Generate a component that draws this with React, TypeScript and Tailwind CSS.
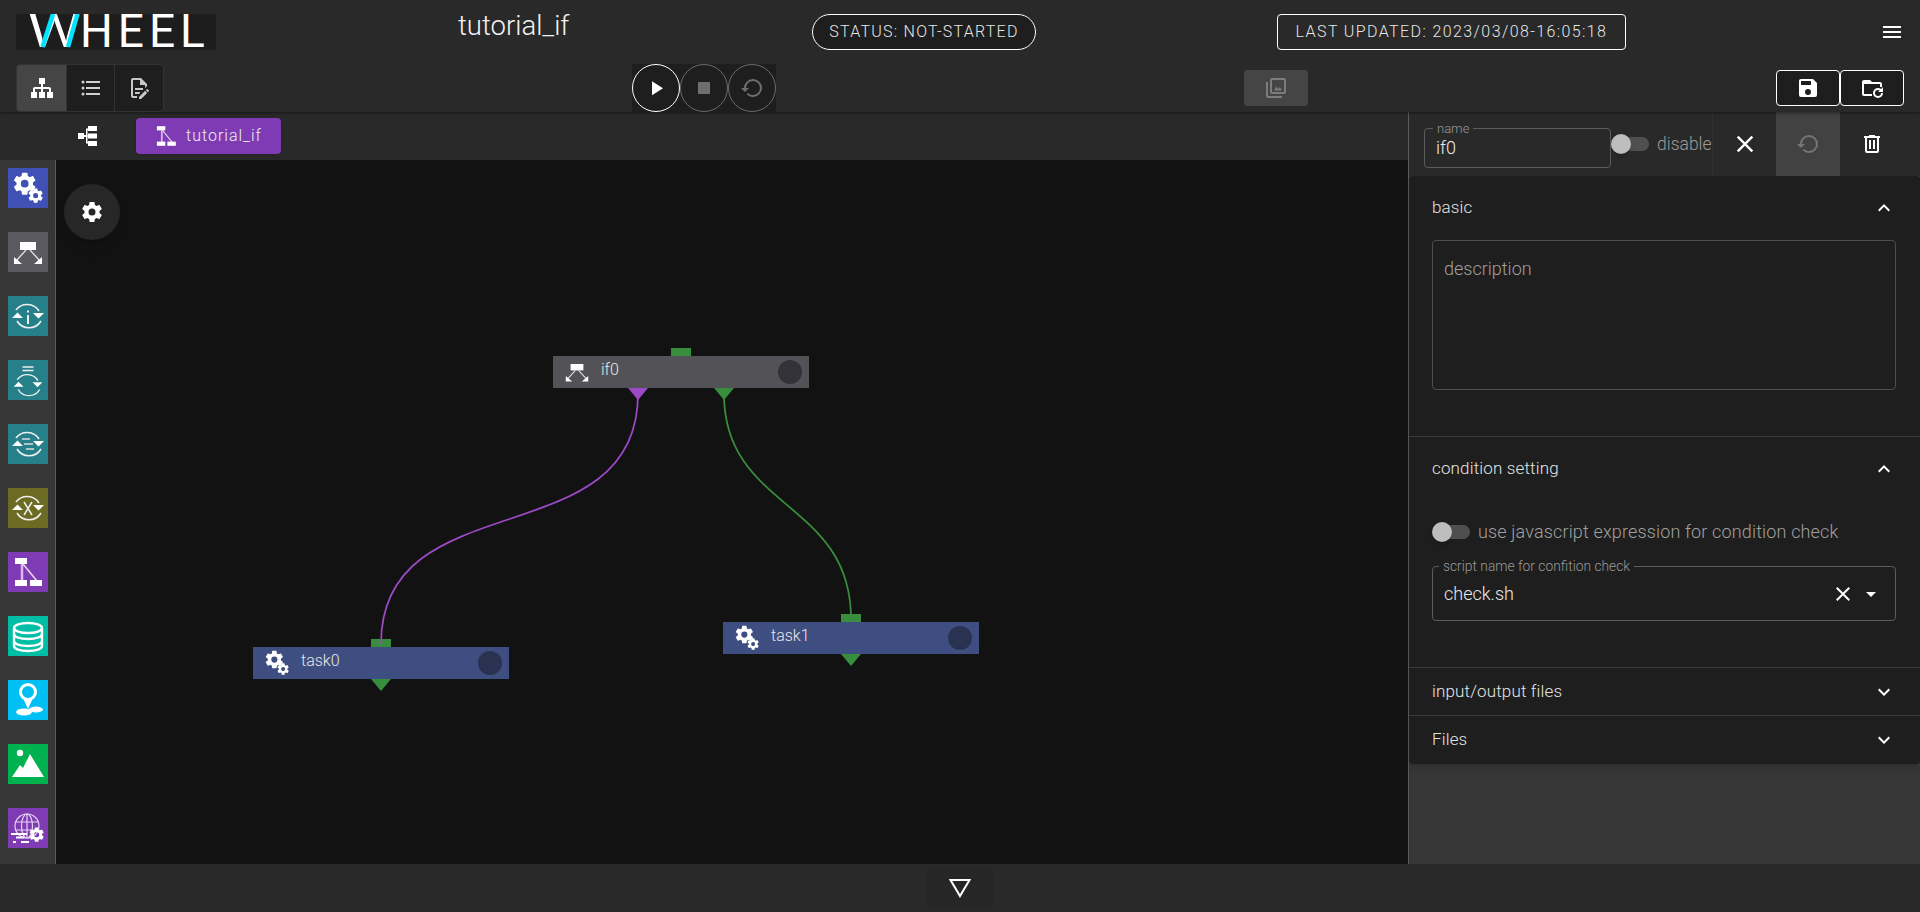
import type { ReactNode } from "react";

const MDI = {
  sitemap: "M9,2V8H11V11H5C3.89,11 3,11.89 3,13V16H1V22H7V16H5V13H11V16H9V22H15V16H13V13H19V16H17V22H23V16H21V13C21,11.89 20.11,11 19,11H13V8H15V2H9Z",
  list: "M7,5H21V7H7V5M7,13V11H21V13H7M4,4.5A1.5,1.5 0 0,1 5.5,6A1.5,1.5 0 0,1 4,7.5A1.5,1.5 0 0,1 2.5,6A1.5,1.5 0 0,1 4,4.5M4,10.5A1.5,1.5 0 0,1 5.5,12A1.5,1.5 0 0,1 4,13.5A1.5,1.5 0 0,1 2.5,12A1.5,1.5 0 0,1 4,10.5M7,19V17H21V19H7M4,16.5A1.5,1.5 0 0,1 5.5,18A1.5,1.5 0 0,1 4,19.5A1.5,1.5 0 0,1 2.5,18A1.5,1.5 0 0,1 4,16.5Z",
  fileEdit: "M8,12H16V14H8V12M10,20H6V4H13V9H18V12.1L20,10.1V8L14,2H6A2,2 0 0,0 4,4V20A2,2 0 0,0 6,22H10V20M8,18H12.1L13,17.1V16H8V18M20.2,13C20.3,13 20.5,13.1 20.6,13.2L21.9,14.5C22.1,14.7 22.1,15.1 21.9,15.3L20.9,16.3L18.8,14.2L19.8,13.2C19.9,13.1 20,13 20.2,13M20.2,16.9L14.1,23H12V20.9L18.1,14.8L20.2,16.9Z",
  play: "M8,5.14V19.14L19,12.14L8,5.14Z",
  stop: "M18,18H6V6H18V18Z",
  restore: "M13,3A9,9 0 0,0 4,12H1L4.89,15.89L4.96,16.03L9,12H6A7,7 0 0,1 13,5A7,7 0 0,1 20,12A7,7 0 0,1 13,19C11.07,19 9.32,18.21 8.06,16.94L6.64,18.36C8.27,20 10.5,21 13,21A9,9 0 0,0 22,12A9,9 0 0,0 13,3Z",
  images: "M22,16V4A2,2 0 0,0 20,2H8A2,2 0 0,0 6,4V16A2,2 0 0,0 8,18H20A2,2 0 0,0 22,16M8,16V4H20V16H8M2,6V20A2,2 0 0,0 4,22H18V20H4V6H2M12.5,10.5L10,14.5H18L15.8,11L14.3,13L12.5,10.5Z",
  save: "M15,9H5V5H15M12,19A3,3 0 0,1 9,16A3,3 0 0,1 12,13A3,3 0 0,1 15,16A3,3 0 0,1 12,19M17,3H5C3.89,3 3,3.9 3,5V19A2,2 0 0,0 5,21H19A2,2 0 0,0 21,19V7L17,3Z",
  folderRefresh: "M4,4C2.89,4 2,4.89 2,6V18A2,2 0 0,0 4,20H12V18H4V8H20V11H22V8C22,6.89 21.1,6 20,6H12L10,4H4M18,12A5,5 0 0,0 13,17A5,5 0 0,0 18,22A5,5 0 0,0 23,17H21A3,3 0 0,1 18,20A3,3 0 0,1 15,17A3,3 0 0,1 18,14C18.6,14 19.2,14.2 19.7,14.5L18,16H23V11L21.2,13.1C20.3,12.4 19.2,12 18,12Z",
  menu: "M3,6H21V8H3V6M3,11H21V13H3V11M3,16H21V18H3V16Z",
  close: "M19,6.41L17.59,5L12,10.59L6.41,5L5,6.41L10.59,12L5,17.59L6.41,19L12,13.41L17.59,19L19,17.59L13.41,12L19,6.41Z",
  trash: "M9,3V4H4V6H5V19A2,2 0 0,0 7,21H17A2,2 0 0,0 19,19V6H20V4H15V3H9M7,6H17V19H7V6M9,8V17H11V8H9M13,8V17H15V8H13Z",
  up: "M7.41,15.41L12,10.83L16.59,15.41L18,14L12,8L6,14L7.41,15.41Z",
  down: "M7.41,8.58L12,13.17L16.59,8.58L18,10L12,16L6,10L7.41,8.58Z",
  caret: "M7,10L12,15L17,10H7Z",
  cog: "M12,15.5A3.5,3.5 0 0,1 8.5,12A3.5,3.5 0 0,1 12,8.5A3.5,3.5 0 0,1 15.5,12A3.5,3.5 0 0,1 12,15.5M19.43,12.97C19.47,12.65 19.5,12.33 19.5,12C19.5,11.67 19.47,11.34 19.43,11L21.54,9.37C21.73,9.22 21.78,8.95 21.66,8.73L19.66,5.27C19.54,5.05 19.27,4.96 19.05,5.05L16.56,6.05C16.04,5.66 15.5,5.32 14.87,5.07L14.5,2.42C14.46,2.18 14.25,2 14,2H10C9.75,2 9.54,2.18 9.5,2.42L9.13,5.07C8.5,5.32 7.96,5.66 7.44,6.05L4.95,5.05C4.73,4.96 4.46,5.05 4.34,5.27L2.34,8.73C2.21,8.95 2.27,9.22 2.46,9.37L4.57,11C4.53,11.34 4.5,11.67 4.5,12C4.5,12.33 4.53,12.65 4.57,12.97L2.46,14.63C2.27,14.78 2.21,15.05 2.34,15.27L4.34,18.73C4.46,18.95 4.73,19.03 4.95,18.95L7.44,17.94C7.96,18.34 8.5,18.68 9.13,18.93L9.5,21.58C9.54,21.82 9.75,22 10,22H14C14.25,22 14.46,21.82 14.5,21.58L14.87,18.93C15.5,18.67 16.04,18.34 16.56,17.94L19.05,18.95C19.27,19.03 19.54,18.95 19.66,18.73L21.66,15.27C21.78,15.05 21.73,14.78 21.54,14.63L19.43,12.97Z",
};

function Mdi({ d, className }: { d: string; className?: string }) {
  return (
    <svg viewBox="0 0 24 24" fill="currentColor" className={className}>
      <path d={d} />
    </svg>
  );
}

/* component glyphs, all in a 40 unit box */
function Gears({ className }: { className?: string }) {
  return (
    <svg viewBox="0 0 40 40" fill="#fff" className={className}>
      <path d={MDI.cog} transform="translate(3.500 2.500) scale(1.1)" />
      <path d={MDI.cog} transform="translate(19 19) scale(.72)" />
    </svg>
  );
}

function Branch({ className }: { className?: string }) {
  return (
    <svg viewBox="0 0 40 40" className={className}>
      <rect x="12" y="10" width="16" height="8" fill="#fff" />
      <path d="M18 18 8 29M22 18l10 11" stroke="#ddd" strokeWidth="1.4" />
      <path d="M6 25v7h8zM34 25v7h-8z" fill="#fff" />
    </svg>
  );
}

function LoopArrows({ small, children }: { small?: boolean; children?: ReactNode }) {
  const y = small ? 6 : 0;
  return (
    <svg viewBox="0 0 40 40" className="h-10 w-10">
      <g transform={`translate(0 ${y}) ${small ? "translate(2 1) scale(.9)" : ""}`}>
        <path d="M8 14A14 14 0 0 1 31 15" fill="none" stroke="#eee" strokeWidth="1.6" />
        <path d="M33 25A14 14 0 0 1 9 25" fill="none" stroke="#eee" strokeWidth="1.6" />
        <path d="M25 17h11l-5.500 5.500zM4 22h11l-5.500-5.500z" fill="#fff" />
      </g>
      {children}
    </svg>
  );
}

function Workflow({ className }: { className?: string }) {
  return (
    <svg viewBox="0 0 40 40" className={className}>
      <path d="M14 12v20" stroke="#d9b8ee" strokeWidth="2.500" />
      <path d="M15 12 29 29" stroke="#e6d3f3" strokeWidth="1.600" />
      <rect x="7" y="6" width="12" height="6" fill="#fff" />
      <rect x="7" y="28" width="12" height="6" fill="#fff" />
      <rect x="22" y="28" width="12" height="6" fill="#fff" />
    </svg>
  );
}

const PALETTE: { bg: string; icon: ReactNode }[] = [
  { bg: "bg-[#3f51b5]", icon: <Gears className="h-10 w-10" /> },
  { bg: "bg-[#5a5a60]", icon: <Branch className="h-10 w-10" /> },
  {
    bg: "bg-[#26808a]",
    icon: (
      <LoopArrows>
        <rect x="19" y="19" width="2" height="9" fill="#eee" />
        <rect x="19" y="14.500" width="2" height="2" fill="#eee" />
      </LoopArrows>
    ),
  },
  {
    bg: "bg-[#26808a]",
    icon: (
      <LoopArrows small>
        <path d="M14.500 7h11M14.500 10.500h11" stroke="#eee" strokeWidth="1.300" />
      </LoopArrows>
    ),
  },
  {
    bg: "bg-[#26808a]",
    icon: (
      <LoopArrows>
        <path d="M14 15h8M16 20h9M18 25h8" stroke="#ddd" strokeWidth="1.500" />
      </LoopArrows>
    ),
  },
  {
    bg: "bg-[#6b6b24]",
    icon: (
      <LoopArrows>
        <path d="M16 14l8 13M24 14l-8 13" stroke="#eee" strokeWidth="1.500" />
      </LoopArrows>
    ),
  },
  { bg: "bg-[#7e3bb3]", icon: <Workflow className="h-10 w-10" /> },
  {
    bg: "bg-[#00bda5]",
    icon: (
      <svg viewBox="0 0 40 40" className="h-10 w-10" fill="none" stroke="#fff" strokeWidth="2.400">
        <ellipse cx="20" cy="12" rx="14" ry="5" />
        <path d="M6 12v18c0 3 6 5 14 5s14-2 14-5V12M6 18c0 3 6 5 14 5s14-2 14-5M6 25c0 3 6 5 14 5s14-2 14-5" />
      </svg>
    ),
  },
  {
    bg: "bg-[#00bff3]",
    icon: (
      <svg viewBox="0 0 40 40" className="h-10 w-10">
        <circle cx="20" cy="12" r="7.500" fill="none" stroke="#fff" strokeWidth="3" />
        <path d="M15 18 20 29 25 18z" fill="#fff" />
        <ellipse cx="16" cy="32" rx="8" ry="3.500" fill="#fff" />
        <ellipse cx="28" cy="29.500" rx="7" ry="3" fill="#fff" />
      </svg>
    ),
  },
  {
    bg: "bg-[#00b14f]",
    icon: (
      <svg viewBox="0 0 40 40" className="h-10 w-10" fill="#fff">
        <circle cx="12" cy="9" r="3.200" />
        <path d="M4 33l8-12 3 3 7-14 14 23z" />
      </svg>
    ),
  },
  {
    bg: "bg-[#7e3bb3]",
    icon: (
      <svg viewBox="0 0 40 40" className="h-10 w-10">
        <g fill="none" stroke="#e6d3f3" strokeWidth="1.200">
          <circle cx="19" cy="18" r="12" />
          <ellipse cx="19" cy="18" rx="5.500" ry="12" />
          <path d="M7 14h24M7 22h24M19 6v24" />
        </g>
        <path d="M3 26h16M8 29.500h8M5 34h3M13 34h8" stroke="#fff" strokeWidth="2" />
        <path d={MDI.cog} transform="translate(20 18) scale(.72)" fill="#fff" />
      </svg>
    ),
  },
];

function Node({
  name,
  tone,
  dot,
  icon,
  position,
  children,
}: {
  name: string;
  tone: string;
  dot: string;
  icon: ReactNode;
  position: string;
  children: ReactNode;
}) {
  return (
    <div className={`absolute flex h-8 w-64 items-center ${tone} ${position}`}>
      <span className="absolute -top-2 left-[118px] h-2 w-5 bg-[#388e3c]" />
      <span className="ml-2 h-8 w-8 shrink-0">{icon}</span>
      <span className="ml-2 -mt-[5px] text-[16px] font-light text-[#e8e8e8]">{name}</span>
      <span className={`absolute right-[7px] top-1 h-6 w-6 rounded-full ${dot}`} />
      {children}
    </div>
  );
}

function Triangle({ color, position }: { color: string; position: string }) {
  return (
    <span
      className={`absolute top-8 h-0 w-0 border-x-[10px] border-t-[12px] border-x-transparent ${color} ${position}`}
    />
  );
}

function Section({ title, open, children }: { title: string; open?: boolean; children?: ReactNode }) {
  return (
    <div className="border-b border-[#3a3a3a] last:border-b-0">
      <div className={`flex items-center justify-between pl-[23px] pr-[24px] ${open ? "h-16" : "h-[47px]"}`}>
        <span className="text-[17px] font-light tracking-[0.15px] text-[#e4e4e4]">{title}</span>
        <Mdi d={open ? MDI.up : MDI.down} className="h-6 w-6 text-white" />
      </div>
      {children}
    </div>
  );
}

function Toggle() {
  return (
    <span className="relative block h-5 w-[38px] shrink-0">
      <span className="absolute left-[2px] top-[3px] h-[14px] w-9 rounded-full bg-[#4f4f4f]" />
      <span className="absolute left-0 top-0 h-5 w-5 rounded-full bg-[#bdbdbd] shadow-md" />
    </span>
  );
}

export default function App() {
  return (
    <div className="flex h-[912px] w-[1920px] flex-col overflow-hidden bg-[#292929] font-['Roboto',sans-serif] text-white">
      {/* top bar */}
      <header className="relative z-10 h-28 shrink-0 bg-[#292929] shadow-[0_1px_3px_rgba(0,0,0,0.45)]">
        <div className="flex h-16 items-center">
          <div className="relative ml-4 mt-[14px] h-9 w-[200px] shrink-0 self-start bg-[#1d1d1d]">
            <span className="absolute left-[12px] top-[-5px] flex text-[46px] leading-[44px] tracking-[5px] text-white">
              <span className="block w-[52px]">
                <span className="inline-block w-[40px] origin-left scale-x-[1.28] tracking-normal">W</span>
              </span>
              <span>HEEL</span>
            </span>
            <svg viewBox="0 0 200 36" className="absolute inset-0 h-9 w-[200px]">
              <path d="M26.500 33 37 0M52 33 61.500 0" stroke="#00e5ff" strokeWidth="4.500" />
            </svg>
          </div>
          <span className="ml-[242px] -mt-[12px] w-[354px] shrink-0 text-[27.500px] font-light leading-8 text-[#f2f2f2]">
            tutorial_if
          </span>
          <span className="flex h-9 w-56 shrink-0 items-center justify-center rounded-full border border-white bg-[#1e1e1e] text-[16px] font-light tracking-[1.25px] text-[#e6e6e6]">
            STATUS: NOT-STARTED
          </span>
          <span className="ml-[241px] flex h-9 w-[349px] shrink-0 items-center justify-center rounded-[4px] border border-white bg-[#292929] text-[16px] font-light tracking-[1.4px] text-[#e6e6e6]">
            LAST UPDATED: 2023/03/08-16:05:18
          </span>
          <Mdi d={MDI.menu} className="ml-[254px] h-6 w-6 text-white" />
        </div>
        <div className="flex h-12 items-start">
          <div className="ml-4 flex h-12 w-[148px] shrink-0 overflow-hidden rounded-[4px] border border-[#333] bg-[#1e1e1e]">
            <span className="flex w-[49px] items-center justify-center bg-[#454545]">
              <Mdi d={MDI.sitemap} className="h-6 w-6 text-white" />
            </span>
            <span className="flex w-[49px] items-center justify-center border-x border-[#333]">
              <Mdi d={MDI.list} className="h-6 w-6 text-[#d0d0d0]" />
            </span>
            <span className="flex flex-1 items-center justify-center">
              <Mdi d={MDI.fileEdit} className="h-6 w-6 text-[#c8c8c8]" />
            </span>
          </div>
          <div className="ml-[468px] flex h-12 shrink-0 bg-[#1e1e1e]">
            <span className="flex h-12 w-12 items-center justify-center rounded-full border border-white">
              <Mdi d={MDI.play} className="h-6 w-6 text-white" />
            </span>
            <span className="flex h-12 w-12 items-center justify-center rounded-full border border-[#6a6a6a]">
              <Mdi d={MDI.stop} className="h-6 w-6 text-[#6f6f6f]" />
            </span>
            <span className="flex h-12 w-12 items-center justify-center rounded-full border border-[#6a6a6a]">
              <Mdi d={MDI.restore} className="h-6 w-6 text-[#6f6f6f]" />
            </span>
          </div>
          <span className="ml-[468px] mt-[6px] flex h-9 w-16 shrink-0 items-center justify-center rounded-[4px] bg-[#454545]">
            <Mdi d={MDI.images} className="h-6 w-6 text-[#7c7c7c]" />
          </span>
          <span className="ml-[468px] mt-[6px] flex h-9 w-16 shrink-0 items-center justify-center rounded-[4px] border border-white bg-[#1e1e1e]">
            <Mdi d={MDI.save} className="h-6 w-6 text-white" />
          </span>
          <span className="mt-[6px] flex h-9 w-16 shrink-0 items-center justify-center rounded-[4px] border border-white bg-[#1e1e1e]">
            <Mdi d={MDI.folderRefresh} className="h-6 w-6 text-white" />
          </span>
        </div>
      </header>

      <div className="flex min-h-0 flex-1">
        {/* graph side */}
        <div className="flex w-[1408px] shrink-0 flex-col">
          <div className="flex h-12 shrink-0 items-center bg-[#292929]">
            <svg viewBox="0 0 24 24" className="ml-[76px] h-6 w-6" fill="#fff">
              <rect x="2" y="9" width="6" height="6" />
              <rect x="12" y="2" width="9" height="5" />
              <rect x="12" y="9.500" width="9" height="5" />
              <rect x="12" y="17" width="9" height="5" />
              <path d="M8 11h2V4.500h2v1.500h-.5v5.500h.5v1h-.5v5.500h.5v1.500h-2V13H8z" />
            </svg>
            <span className="ml-9 flex h-9 w-[145px] items-center rounded-[4px] bg-[#7e3bb3] pl-4 shadow">
              <Workflow className="h-7 w-7" />
              <span className="ml-[6px] text-[16px] font-light tracking-[1px] text-[#eee]">tutorial_if</span>
            </span>
          </div>
          <div className="flex min-h-0 flex-1">
            <aside className="flex w-14 shrink-0 flex-col gap-6 border-r border-[#5a5a5a] bg-[#363636] pl-2 pt-2">
              {PALETTE.map((item, i) => (
                <span key={i} className={`block h-10 w-10 ${item.bg}`}>
                  {item.icon}
                </span>
              ))}
            </aside>
            <main className="relative flex-1 bg-[#121212]">
              <span className="absolute left-2 top-6 flex h-14 w-14 items-center justify-center rounded-full bg-[#272727] shadow-lg">
                <Mdi d={MDI.cog} className="h-6 w-6 text-white" />
              </span>
              <Node
                name="if0"
                tone="bg-[#535357]"
                dot="bg-[#323238]"
                icon={<Branch className="h-8 w-8" />}
                position="left-[497px] top-[196px]"
              >
                <Triangle color="border-t-[#9c49c6]" position="left-[75px]" />
                <Triangle color="border-t-[#388e3c]" position="left-[161px]" />
              </Node>
              <Node
                name="task0"
                tone="bg-[#3f4e80]"
                dot="bg-[#2a3252]"
                icon={<Gears className="h-8 w-8" />}
                position="left-[197px] top-[487px]"
              >
                <Triangle color="border-t-[#388e3c]" position="left-[118px]" />
              </Node>
              <Node
                name="task1"
                tone="bg-[#3f4e80]"
                dot="bg-[#2a3252]"
                icon={<Gears className="h-8 w-8" />}
                position="left-[667px] top-[462px]"
              >
                <Triangle color="border-t-[#388e3c]" position="left-[118px]" />
              </Node>
              {/* connections between nodes */}
              <svg className="pointer-events-none absolute inset-0 h-full w-full" fill="none" strokeWidth="1.750">
                <path d="M582 234C582 398 325 320 325 484" stroke="#9c49c6" />
                <path d="M668 234C668 350 795 340 795 459" stroke="#388e3c" />
              </svg>
            </main>
          </div>
        </div>

        {/* property panel */}
        <section className="flex flex-1 flex-col border-l border-[#5a5a5a] bg-[#363636]">
          <div className="flex h-16 shrink-0 bg-[#292929]">
            <div className="relative ml-[15px] mt-4 h-10 w-[187px] shrink-0 rounded-[4px] border border-[#5c5c5c]">
              <span className="absolute -top-[7px] left-[8px] bg-[#292929] px-1 text-[13px] leading-[14px] font-light text-[#9a9a9a]">
                name
              </span>
              <span className="absolute left-[11px] top-[7px] text-[18px] leading-6 font-light text-[#eaeaea]">if0</span>
            </div>
            <div className="flex w-[101px] shrink-0 items-center">
              <Toggle />
              <span className="ml-[8px] text-[17.500px] font-light text-[#9a9a9a]">disable</span>
            </div>
            <span className="flex w-16 items-center justify-center border-l border-[#303030]">
              <Mdi d={MDI.close} className="h-7 w-7 text-white" />
            </span>
            <span className="flex w-16 items-center justify-center bg-[#424242]">
              <Mdi d={MDI.restore} className="h-6 w-6 text-[#757575]" />
            </span>
            <span className="flex w-16 items-center justify-center">
              <Mdi d={MDI.trash} className="h-6 w-6 text-white" />
            </span>
          </div>
          <div className="h-[588px] shrink-0 rounded-[4px] bg-[#1e1e1e] shadow-md">
            <Section title="basic" open>
              <div className="mb-[46px] ml-[23px] mr-6 h-[150px] rounded-[4px] border border-[#4d4d4d] px-[11px] pt-[14px] text-[18px] font-light text-[#a0a0a0]">
                description
              </div>
            </Section>
            <Section title="condition setting" open>
              <div className="mt-[21px] flex h-5 items-center pl-[23px]">
                <Toggle />
                <span className="ml-2 text-[18px] leading-5 font-light tracking-[0.15px] text-[#a0a0a0]">
                  use javascript expression for condition check
                </span>
              </div>
              <div className="relative mb-[46px] ml-[23px] mr-6 mt-[24px] flex h-[55px] items-center rounded-[4px] border border-[#5c5c5c] pl-[11px] pr-[12px]">
                <span className="absolute -top-[8px] left-[6px] bg-[#1e1e1e] px-1 text-[13.800px] leading-[14px] font-light text-[#9a9a9a]">
                  script name for confition check
                </span>
                <span className="flex-1 text-[18px] font-light text-[#eaeaea]">check.sh</span>
                <Mdi d={MDI.close} className="h-6 w-6 text-white" />
                <Mdi d={MDI.caret} className="ml-1 h-6 w-6 text-white" />
              </div>
            </Section>
            <Section title="input/output files" />
            <Section title="Files" />
          </div>
        </section>
      </div>

      <footer className="flex h-12 shrink-0 items-start justify-center bg-[#292929]">
        <span className="mt-[6px] flex h-9 w-16 items-center justify-center rounded-[4px] bg-[#262626] shadow">
          <svg viewBox="0 0 24 20" className="h-5 w-6" fill="none" stroke="#fff" strokeWidth="2">
            <path d="M2.500 2h19L12 18z" />
          </svg>
        </span>
      </footer>
    </div>
  );
}
